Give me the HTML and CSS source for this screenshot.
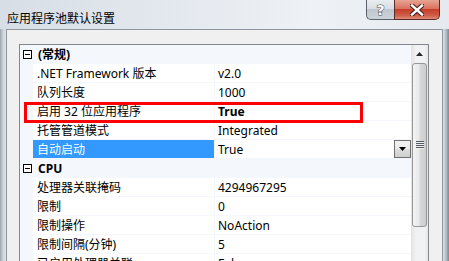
FILE: index.html
```html
<!DOCTYPE html>
<html>
<head>
<meta charset="utf-8">
<link rel="stylesheet" href="styles.css">
</head>
<body>
<div class="window">
  <div class="titlebar">
    <span class="title">应用程序池默认设置</span>
    <div class="caption-buttons">
      <div class="cbtn help"><span class="q">?</span></div>
      <div class="cbtn close">
        <svg width="14" height="12" viewBox="0 0 14 12">
          <path d="M2 1.5 L12 10.5 M12 1.5 L2 10.5" stroke="#4a2020" stroke-width="4.6" stroke-linecap="square"/>
          <path d="M2 1.5 L12 10.5 M12 1.5 L2 10.5" stroke="#ffffff" stroke-width="2.4" stroke-linecap="square"/>
        </svg>
      </div>
    </div>
  </div>
  <div class="client">
    <div class="grid">
      <div class="rows">
        <div class="row cat"><span class="margin"><span class="toggle"></span></span><span class="cat-name">(常规)</span></div>
        <div class="row"><span class="margin"></span><span class="name">.NET Framework 版本</span><span class="value">v2.0</span></div>
        <div class="row"><span class="margin"></span><span class="name">队列长度</span><span class="value">1000</span></div>
        <div class="row"><span class="margin"></span><span class="name">启用 32 位应用程序</span><span class="value bold">True</span></div>
        <div class="row"><span class="margin"></span><span class="name">托管管道模式</span><span class="value">Integrated</span></div>
        <div class="row selected"><span class="margin"></span><span class="name">自动启动</span><span class="value">True<span class="drop"><svg width="7" height="4" viewBox="0 0 7 4"><path d="M0 0 H7 L3.5 4 Z" fill="#000"/></svg></span></span></div>
        <div class="row cat"><span class="margin"><span class="toggle"></span></span><span class="cat-name">CPU</span></div>
        <div class="row"><span class="margin"></span><span class="name">处理器关联掩码</span><span class="value">4294967295</span></div>
        <div class="row"><span class="margin"></span><span class="name">限制</span><span class="value">0</span></div>
        <div class="row"><span class="margin"></span><span class="name">限制操作</span><span class="value">NoAction</span></div>
        <div class="row"><span class="margin"></span><span class="name">限制间隔(分钟)</span><span class="value">5</span></div>
        <div class="row"><span class="margin"></span><span class="name">已启用处理器关联</span><span class="value">False</span></div>
      </div>
      <div class="scrollbar">
        <div class="sb-up"><svg width="7" height="4" viewBox="0 0 7 4"><path d="M3.5 0 L7 4 H0 Z" fill="#2a2a2a"/></svg></div>
        <div class="sb-thumb"><span class="grip"></span></div>
        <div class="sb-track"></div>
      </div>
    </div>
  </div>
  <div class="mark"></div>
</div>
</body>
</html>
```
FILE: styles.css
```css
* { box-sizing: border-box; }
html, body { margin: 0; padding: 0; }
body {
  width: 449px;
  height: 261px;
  overflow: hidden;
  background: #c9d1da;
  font-family: "Noto Sans", "Noto Sans CJK SC", sans-serif;
  font-size: 12px;
}
.window {
  position: relative;
  width: 449px;
  height: 261px;
  overflow: hidden;
  background: linear-gradient(to right, #9aa3ad 0px, #cdd4dc 3px, #dde3ea 6px, #dde3ea 443px, #b5bcc4 446px, #7f8890 449px);
  display: flex;
  flex-direction: column;
}
.titlebar {
  height: 29px;
  flex: none;
  display: flex;
  align-items: flex-start;
  padding-left: 7px;
  padding-right: 9px;
  background: linear-gradient(to right, #d8dee6 0%, #e4e9ef 40%, #eef1f5 70%, #e6eaef 100%);
}
.title {
  font-family: "Noto Sans CJK SC", sans-serif;
  font-size: 12px;
  line-height: 16px;
  margin-top: 10px;
  color: #000;
}
.caption-buttons {
  margin-left: auto;
  display: flex;
  height: 20px;
}
.cbtn {
  height: 20px;
  display: flex;
  align-items: center;
  justify-content: center;
  border: 1px solid #5a6169;
  border-top: none;
}
.help {
  width: 28px;
  border-radius: 0 0 0 5px;
  border-right: none;
  background: linear-gradient(to bottom, #e9edf1 0%, #d9dee4 45%, #bfc6ce 50%, #ccd3da 100%);
}
.q {
  font-family: "DejaVu Sans", sans-serif;
  font-weight: bold;
  font-size: 14px;
  line-height: 14px;
  color: #fff;
  -webkit-text-stroke: 1px #3d434a;
  paint-order: stroke fill;
}
.close {
  width: 46px;
  border-radius: 0 0 5px 0;
  border-color: #5b2b27;
  background: linear-gradient(to bottom, #e8a493 0%, #d9725f 45%, #c4402c 50%, #cf5b45 80%, #e08d76 100%);
}
.client {
  flex: 1;
  margin: 0 6px;
  border-left: 1px solid #8e969f;
  border-right: 1px solid #8e969f;
  border-top: 1px solid #8e969f;
  background: #f0f0f0;
  padding: 14px 13px 0 12px;
  overflow: hidden;
}
.grid {
  display: flex;
  border: 1px solid #828790;
  background: #fff;
  height: 240px;
}
.rows {
  flex: 1;
  display: flex;
  flex-direction: column;
  background: #f4f7fc;
}
.row {
  height: 19px;
  flex: none;
  display: flex;
  border-bottom: 1px solid #f4f7fc;
  line-height: 20px;
  color: #000;
}
.margin {
  width: 13px;
  flex: none;
  background: #f4f7fc;
  display: flex;
  align-items: center;
  justify-content: center;
}
.toggle {
  position: relative;
  width: 9px;
  height: 9px;
  border: 1px solid #000;
  background: #fff;
  margin-left: 2px;
  margin-top: 1px;
}
.toggle::after {
  content: "";
  position: absolute;
  left: 1px;
  top: 3px;
  width: 5px;
  height: 1px;
  background: #000;
}
.cat-name {
  padding-left: 5px;
  font-weight: bold;
}
.name {
  width: 182px;
  flex: none;
  background: #fff;
  padding-left: 4px;
  border-right: 1px solid #f4f7fc;
  white-space: nowrap;
  overflow: hidden;
}
.value {
  flex: 1;
  background: #fff;
  padding-left: 3px;
  display: flex;
  white-space: nowrap;
}
.bold { font-weight: bold; }
.selected .name {
  background: #3399ff;
  color: #fff;
}
.drop {
  margin-left: auto;
  align-self: flex-start;
  width: 17px;
  height: 18px;
  border: 1px solid #707070;
  background: linear-gradient(to bottom, #f2f2f2 0%, #ebebeb 50%, #dddddd 51%, #cfcfcf 100%);
  display: flex;
  align-items: center;
  justify-content: center;
}
.scrollbar {
  width: 17px;
  flex: none;
  display: flex;
  flex-direction: column;
  background: linear-gradient(to right, #e3e3e3 0%, #f2f2f2 30%, #f2f2f2 80%, #e6e6e6 100%);
}
.sb-up {
  height: 18px;
  flex: none;
  display: flex;
  align-items: center;
  justify-content: center;
}
.sb-thumb {
  height: 164px;
  flex: none;
  margin: 0 1px;
  border: 1px solid #979797;
  border-radius: 3px;
  background: linear-gradient(to right, #f4f4f4 0%, #e9e9e9 45%, #d8d8d8 55%, #cdcdcd 100%);
  display: flex;
  align-items: center;
  justify-content: center;
}
.grip {
  width: 8px;
  height: 8px;
  background: repeating-linear-gradient(to bottom, #555b62 0px, #555b62 1px, #eeeeee 1px, #eeeeee 2px);
}
.sb-track { flex: 1; }
.mark {
  position: absolute;
  left: 24px;
  top: 102px;
  width: 339px;
  height: 21px;
  border: 3px solid #ff0000;
}
```
